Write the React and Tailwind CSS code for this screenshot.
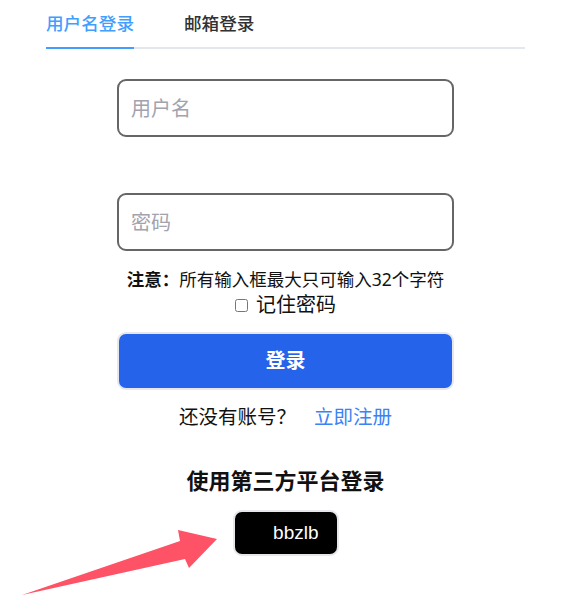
import React, { useState } from 'react';

const font = "font-['Noto_Sans','Noto_Sans_CJK_SC',sans-serif]";

const LoginTabs = ({ active, onChange }) => (
  <div className="flex items-end gap-[50px] border-b-2 border-[#e4e7ed]">
    {['用户名登录', '邮箱登录'].map((label, i) => (
      <button
        key={label}
        onClick={() => onChange(i)}
        className={
          'h-[49px] -mb-[2px] border-b-2 text-[17.6px] font-medium leading-none flex items-center ' +
          (active === i
            ? 'text-[#409eff] border-[#409eff]'
            : 'text-[#303133] border-transparent')
        }
      >
        {label}
      </button>
    ))}
  </div>
);

const Arrow = () => (
  <svg className="absolute left-0 top-0 pointer-events-none" width="575" height="612">
    <polygon
      points="22,595 180,541 178,530 217,539 189,568 185,559"
      fill="#fe5266"
    />
  </svg>
);

export default function App() {
  const [tab, setTab] = useState(0);
  const [remember, setRemember] = useState(false);

  return (
    <div className={`relative w-[575px] h-[612px] bg-white text-[#111] ${font}`}>
      <div className="mx-[46px] w-[479px]">
        <LoginTabs active={tab} onChange={setTab} />

        <div className="flex flex-col items-center">
          <input
            maxLength={32}
            placeholder="用户名"
            className="mt-[30px] w-[337px] h-[58px] border-2 border-[#666] rounded-[9px] px-[12px] text-[20px] outline-none placeholder:text-[#a3a3ae]"
          />
          <input
            type="password"
            maxLength={32}
            placeholder="密码"
            className="mt-[56px] w-[337px] h-[58px] border-2 border-[#666] rounded-[9px] px-[12px] text-[20px] outline-none placeholder:text-[#a3a3ae]"
          />

          <p className="mt-[16px] text-[17.5px] leading-[24px]">
            <span className="font-bold">注意：</span>所有输入框最大只可输入32个字符
          </p>
          <label className="flex items-center gap-[8px] text-[20px] leading-[28px]">
            <input
              type="checkbox"
              checked={remember}
              onChange={(e) => setRemember(e.target.checked)}
              className="w-[13px] h-[13px]"
            />
            记住密码
          </label>

          <button className="mt-[13px] w-[337px] h-[58px] bg-[#2563eb] border-2 border-[#e5e7eb] rounded-[9px] text-white text-[20px] font-bold">
            登录
          </button>

          <p className="mt-[13px] text-[19.5px] leading-[28px]">
            还没有账号？<a href="#" className="ml-[18px] text-[#3b82f6]">立即注册</a>
          </p>

          <h3 className="mt-[34px] text-[22px] leading-[30px] font-bold">使用第三方平台登录</h3>

          <button className="mt-[15px] w-[106px] h-[46px] bg-black border-2 border-[#e5e7eb] rounded-[9px] flex items-center justify-end pr-[18px] text-white text-[19px] font-['Liberation_Sans',sans-serif]">
            bbzlb
          </button>
        </div>
      </div>
      <Arrow />
    </div>
  );
}
